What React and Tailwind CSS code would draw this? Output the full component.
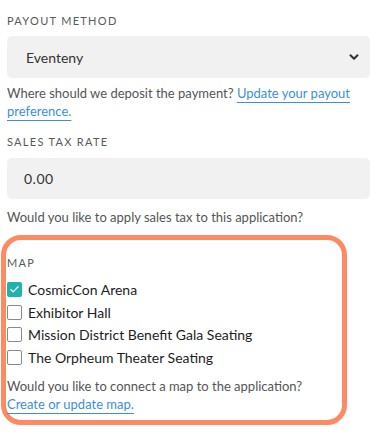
import { ChevronDown, Check } from "lucide-react";

const maps = [
    { name: 'CosmicCon Arena', checked: true },
    { name: 'Exhibitor Hall', checked: false },
    { name: 'Mission District Benefit Gala Seating', checked: false },
    { name: 'The Orpheum Theater Seating', checked: false },
];

const Label = ({ children }) => (
    <div className="text-[11px] leading-[14px] tracking-[1.3px] uppercase text-[#5a5a5a]">{children}</div>
);

export default function App() {
    return (
        <div className="w-[381px] h-[434px] bg-white font-['Lato',sans-serif] text-[13px] overflow-hidden">
            <div className="pl-[7px] pr-[11px] pt-[14px]">
                {/* Payout method */}
                <Label>Payout Method</Label>
                <div className="mt-[8px] h-[42px] rounded-[5px] bg-[#f1f1f1] flex items-center justify-between pl-[19px] pr-[9px]">
                    <span className="text-[14px] text-[#333]">Eventeny</span>
                    <ChevronDown size={14} strokeWidth={3.5} className="text-[#333]" />
                </div>
                <p className="mt-[6px] leading-[18px] text-[#555]">
                    Where should we deposit the payment?{' '}
                    <a className="text-[#3d8fd6] underline decoration-1 underline-offset-[4px]">Update your payout preference.</a>
                </p>

                {/* Sales tax */}
                <div className="mt-[15px]"><Label>Sales Tax Rate</Label></div>
                <div className="mt-[9px] h-[41px] rounded-[5px] bg-[#f1f1f1] flex items-center pl-[17px]">
                    <span className="text-[14px] text-[#333] tracking-[0.5px]">0.00</span>
                </div>
                <p className="mt-[9px] leading-[18px] text-[#555]">Would you like to apply sales tax to this application?</p>
            </div>

            {/* Map (highlighted) */}
            <div className="mt-[9px] ml-[1px] w-[346px] h-[190px] border-[5px] border-[#fd8a62] rounded-[20px] pl-[1px] pt-[16px]">
                <Label>Map</Label>
                <div className="mt-[12px] flex flex-col gap-[7.5px]">
                    {maps.map((m) => (
                        <div key={m.name} className="flex items-center h-[15px]">
                            {m.checked ? (
                                <div className="w-[15px] h-[15px] rounded-[2px] bg-[#20b3ad] flex items-center justify-center">
                                    <Check size={11} strokeWidth={2.5} className="text-white" />
                                </div>
                            ) : (
                                <div className="w-[15px] h-[15px] rounded-[2px] border border-[#8a8a8a] bg-white" />
                            )}
                            <span className="ml-[6px] text-[14px] text-[#1d1d1d]">{m.name}</span>
                        </div>
                    ))}
                </div>
                <p className="mt-[12px] leading-[18px] text-[#555]">
                    Would you like to connect a map to the application?
                    <br />
                    <a className="text-[#3d8fd6] underline decoration-1 underline-offset-[4px]">Create or update map.</a>
                </p>
            </div>
        </div>
    );
}
